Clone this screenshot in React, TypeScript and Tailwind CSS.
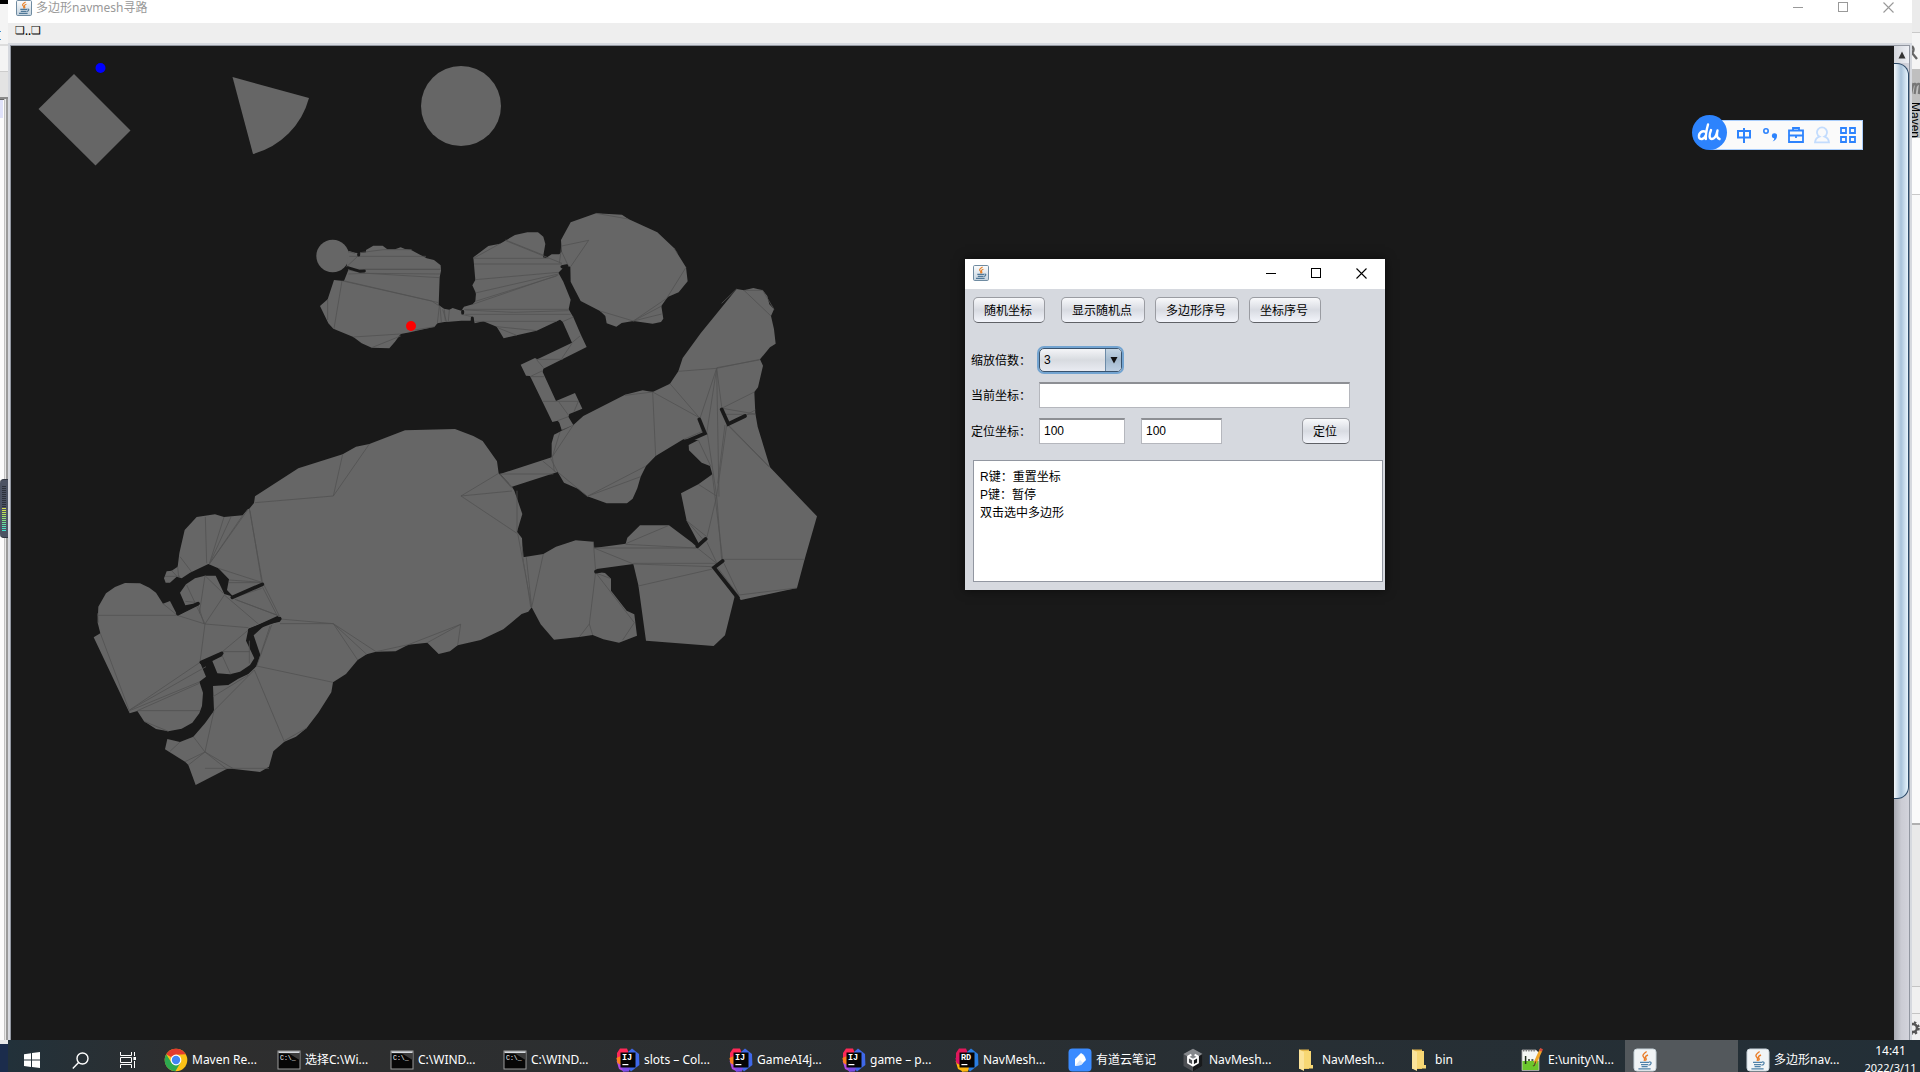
import React from "react";

const UI = "font-['Noto_Sans','Noto_Sans_CJK_SC',sans-serif]";
const SWING = "font-['Liberation_Sans','Noto_Sans_CJK_SC',sans-serif]";

function JavaIcon({ className }: { className: string }) {
  return (
    <svg viewBox="0 0 16 16" className={className} aria-hidden="true">
      <defs>
        <linearGradient id="jv" x1="0" y1="0" x2="0" y2="1">
          <stop offset="0" stopColor="#fdfdfd" />
          <stop offset="1" stopColor="#c3d2de" />
        </linearGradient>
      </defs>
      <rect x="0.5" y="0.5" width="15" height="15" rx="1.2" fill="url(#jv)" stroke="#6f8ba1" />
      <path d="M9.6 2 C6 4.2 6 5 7.4 6.2 C8.2 7 8 7.6 7.4 8.4 M10.4 4.2 C8 5.2 8 6 8.8 6.8 C9.2 7.4 8.8 8 8.4 8.4" fill="none" stroke="#e8822a" strokeWidth="1.1" />
      <path d="M4.3 9.4 H11 M4.8 11.4 H10.6 M3 13.4 H11.6 M11.4 9.2 C13.6 8.8 13 11 11 11.4" fill="none" stroke="#4f7898" strokeWidth="1.1" />
    </svg>
  );
}

function JavaTaskIcon() {
  return (
    <svg viewBox="0 0 24 24" className="size-6" aria-hidden="true">
      <rect x="1" y="1" width="22" height="22" rx="3" fill="#f1f4f6" stroke="#c8d3da" />
      <path d="M13.6 3.5 C8.6 7 9.6 8 11.2 9.8 C12.2 11 11.6 12 11 12.8 M15 7 C11.8 8.4 12.2 9.2 13 10.4 C13.6 11.4 13 12.2 12.4 12.8" fill="none" stroke="#ea7d28" strokeWidth="1.4" />
      <path d="M7 14.4 H16 M8 16.6 H15 M8.6 18.6 H14.6 M5.4 20.8 H17.6 M16 14 C19.4 13.4 18.4 17 15.4 17.2" fill="none" stroke="#4f81a8" strokeWidth="1.2" />
    </svg>
  );
}

function ChromeIcon() {
  return (
    <svg viewBox="0 0 24 24" className="size-6" aria-hidden="true">
      <circle cx="12" cy="12" r="11.3" fill="#fbc116" />
      <path d="M12 12 L2.2 6.3 A11.3 11.3 0 0 1 21.8 6.3 L12 6.8 Z" fill="#e33b2e" />
      <path d="M2.2 6.3 A11.3 11.3 0 0 0 11.4 23.3 L16.6 14.6 L7.4 14.6 Z" fill="#2da94f" />
      <circle cx="12" cy="12" r="5.4" fill="#fff" />
      <circle cx="12" cy="12" r="4.2" fill="#4285f4" />
    </svg>
  );
}

function CmdIcon() {
  return (
    <svg viewBox="0 0 24 24" className="size-6" aria-hidden="true">
      <rect x="1" y="3" width="22" height="18" fill="#070707" stroke="#9b9b9b" />
      <path d="M1.5 4.2 H22.5" stroke="#d7dbe0" strokeWidth="1.8" />
      <path d="M1.5 5 L12 5.5 L22.5 12 V5 Z" fill="#3c3c3c" />
      <text x="3" y="11.6" fontSize="6.5" fill="#fff" fontFamily="Liberation Mono, monospace">C:\_</text>
    </svg>
  );
}

function JetIcon({ label }: { label: string }) {
  const rider = label === "RD";
  return (
    <svg viewBox="0 0 24 24" className="size-6" aria-hidden="true">
      <path d="M1 5 L4 0.5 L11 0.5 L14 8 L8 17 L1 14 Z" fill={rider ? "#e0195a" : "#fe2857"} />
      <path d="M12 4 L16 0.5 L23 6 L23.4 17 L15 23.5 L10 18 Z" fill={rider ? "#2a7de1" : "#3f68e8"} />
      <path d="M0.6 13 L6 10 L12 20 L8 23.6 L3 21 Z" fill={rider ? "#fdb60d" : "#b04ae0"} />
      <path d="M0.4 10 L5 8 L5 17 L1.4 15 Z" fill={rider ? "#dd1265" : "#fc801d"} />
      <path d="M6 19 L14 19 L13 23.6 L7 23.8 Z" fill={rider ? "#fdb60d" : "#7b4be6"} />
      <rect x="4.5" y="4.5" width="15" height="15" fill="#050505" />
      <text x="6" y="12.4" fontSize="8.5" fontWeight="700" fill="#fff" fontFamily="Liberation Mono, monospace">{label}</text>
      <rect x="6.4" y="16" width="6" height="1.2" fill="#fff" />
    </svg>
  );
}

function YoudaoIcon() {
  return (
    <svg viewBox="0 0 24 24" className="size-6" aria-hidden="true">
      <rect x="0.5" y="0.5" width="23" height="23" rx="4" fill="#3b8bff" />
      <path d="M7 18 L7 11 L13 5 Q17 7 18 12 L13 17 Z" fill="#fff" />
      <path d="M7 18 L12 12 L15 15 L13 17 Z" fill="#d5e6ff" />
    </svg>
  );
}

function UnityIcon() {
  return (
    <svg viewBox="0 0 24 24" className="size-6" aria-hidden="true">
      <path d="M12 0.8 L21.5 6 V18 L12 23.4 L2.5 18 V6 Z" fill="#4c4f53" />
      <path d="M12 0.8 L21.5 6 L12 12 L2.5 6 Z" fill="#85888c" />
      <path d="M12 12 L21.5 6 V18 L12 23.4 Z" fill="#17191b" />
      <path d="M10.4 6.6 L7 8.6 V14.8 L12 17.8 L17 14.8 V8.6 L13.6 6.6 M12 11.8 V17 M12 11.8 L7.6 9.2 M12 11.8 L16.4 9.2" fill="none" stroke="#fff" strokeWidth="1.8" />
    </svg>
  );
}

function FolderIcon() {
  return (
    <svg viewBox="0 0 24 24" className="size-6" aria-hidden="true">
      <path d="M5 1.5 H15 V21 H5 Z" fill="#e3b64c" />
      <path d="M7.5 3 H17 V17 H19 V20.5 H10 Z" fill="#f7d774" />
      <path d="M5 1.5 L10 4 V23 L5 20.5 Z" fill="#fbe39a" />
    </svg>
  );
}

function NotepadIcon() {
  return (
    <svg viewBox="0 0 24 24" className="size-6" aria-hidden="true">
      <path d="M2 2 H16 L19 5 V22.5 H2 Z" fill="#f5f7f4" stroke="#a8aaa8" strokeWidth="0.8" />
      <path d="M2.4 13 H18.6 V22 H2.4 Z" fill="#6cc62c" />
      <path d="M3 2.6 H16" stroke="#7c7c7c" strokeWidth="1.6" strokeDasharray="1.4 1.2" />
      <path d="M5.6 8 V16 M8 12 H10 M11.4 12 H13.4" stroke="#23301d" strokeWidth="1.5" />
      <path d="M21 2 L15 15" stroke="#f0a527" strokeWidth="3" />
      <path d="M15.8 13.4 L14.4 17.4 L12.9 18" stroke="#5f4a22" strokeWidth="1.2" fill="none" />
      <path d="M21.6 0.6 L20.4 3.2" stroke="#d64b3c" strokeWidth="3" />
    </svg>
  );
}

function WindowControls({ className }: { className: string }) {
  return (
    <div className={"flex h-full items-center " + className}>
      <button aria-label="Minimize" className="flex h-full w-12 items-center justify-center">
        <svg width="11" height="11" className="block"><path d="M0 5.5 H10" stroke="currentColor" /></svg>
      </button>
      <button aria-label="Maximize" className="flex h-full w-[43px] items-center justify-center">
        <svg width="11" height="11" className="block"><rect x="0.5" y="0.5" width="9" height="9" fill="none" stroke="currentColor" /></svg>
      </button>
      <button aria-label="Close" className="flex h-full w-[47px] items-center justify-center">
        <svg width="11" height="11" className="block"><path d="M0.5 0.5 L10.5 10.5 M10.5 0.5 L0.5 10.5" stroke="currentColor" strokeWidth="1.1" /></svg>
      </button>
    </div>
  );
}

/* Mesh sections, each in its own local space at three units per pixel. */
const NORTH =
  "M145 152 L165 158 L180 160 L198 157 L198 150 L220 137 L248 137 L262 148 L285 148 L302 142 L315 147 L332 149 L380 175 L402 180 L422 196 L423 212 L419 232 L416 315 L432 326 L448 329 L458 324 L476 330 L484 332 L492 320 L518 313 L526 304 L528 280 L517 256 L526 240 L520 172 L565 138 L600 131 L645 105 L682 97 L714 97 L730 110 L736 132 L729 172 L738 174 L755 163 L778 163 L785 155 L783 120 L812 67 L888 40 L966 44 L985 57 L1072 97 L1122 144 L1158 202 L1163 244 L1136 277 L1103 291 L1084 318 L1090 356 L1083 366 L1058 371 L1000 363 L965 369 L949 380 L920 370 L916 348 L900 333 L842 303 L812 245 L811 200 L786 195 L787 206 L775 218 L790 245 L812 299 L806 328 L820 352 L843 405 L860 441 L730 506 L728 516 L768 603 L825 579 L847 626 L808 642 L805 650 L820 675 L785 690 L778 668 L773 662 L757 666 L690 528 L678 527 L662 494 L705 474 L712 478 L816 428 L788 365 L780 359 L710 392 L650 406 L611 415 L590 380 L550 364 L524 370 L522 360 L516 350 L512 362 L484 362 L448 365 L433 366 L412 370 L404 380 L330 397 L302 402 L285 425 L268 445 L215 443 L185 430 L160 411 L100 386 L85 370 L60 318 L83 298 L102 240 L132 243 L145 210 L140 200 Z";
const NORTH_LINES =
  "M140 200 L176 166 M145 155 L165 160 M180 158 L250 149 L335 149 M148 169 H378 M140 200 L160 208 H422 M195 208 H420 M145 210 L195 220 L420 222 M145 222 L200 220 L418 233 M128 243 L416 308 M135 243 L395 303 L418 318 M126 243 L102 386 M83 298 V360 M160 411 L302 402 M215 443 L302 408 M404 380 L345 390 M418 318 L412 370 M420 318 L424 366 M428 328 L440 366 M433 328 L436 364 M448 330 L445 364 M484 343 L516 350 M522 192 H786 M520 175 H745 M522 174 L598 132 M617 120 L729 165 M617 122 L786 190 M526 239 L775 217 M526 279 L775 222 M518 313 L775 225 M526 304 L770 228 M492 328 H806 M496 330 L640 337 L806 332 M496 343 H812 M524 364 H770 M590 380 L710 392 M595 384 L650 406 M788 365 L820 351 M816 428 L840 408 M816 430 L785 476 M712 478 H788 M709 478 L730 503 M690 530 L728 512 M690 530 H732 M728 604 H837 M835 604 L822 635 M776 605 L805 645 M773 662 L805 650 M785 138 L866 121 L812 200 M785 138 L778 190 M785 155 L805 198 M888 40 L985 57 M1122 144 L1132 160 M1158 202 L1100 295 L1000 363 L1085 318 M1000 363 L1085 342 M1000 363 L900 333";

const EAST =
  "M460 465 L490 438 L615 374 L668 361 L698 366 L750 341 L775 304 L788 264 L842 190 L950 57 L972 61 L1000 54 L1028 61 L1042 78 L1048 103 L1062 118 L1053 138 L1062 178 L1067 221 L1050 232 L1020 268 L1029 287 L1014 352 L1003 366 L1006 430 L1013 470 L1050 592 L1191 739 L1154 868 L1131 954 L963 990 L945 975 L943 983 L915 1096 L881 1128 L678 1112 L655 945 L640 882 L530 897 L527 905 L555 909 L573 926 L573 962 L620 1022 L643 1033 L651 1097 L597 1118 L550 1108 L518 1095 L478 1101 L402 1109 L362 1063 L335 1012 L309 862 L370 852 L408 830 L467 811 L520 815 L522 834 L617 821 L622 803 L660 766 L747 766 L815 817 L832 832 L835 818 L800 752 L783 670 L835 643 L877 613 L870 588 L845 578 L807 541 L806 525 L835 510 L790 508 L707 558 L678 588 L662 620 L652 655 L638 686 L621 700 L560 700 L502 679 L475 657 L432 638 L413 606 L276 650 L240 612 L395 562 L395 520 L402 494 L425 482 Z";
const EAST_LINES =
  "M425 482 L460 465 L397 560 M397 560 L420 486 M392 565 L413 606 M397 560 L403 605 M368 573 L408 606 M240 612 H400 M615 376 L698 366 L707 558 M698 366 L838 443 M750 341 L838 443 M775 304 L890 295 L1020 268 M890 293 L1018 270 M890 295 L840 445 M890 295 L860 490 M890 295 L897 680 M890 295 L905 410 M905 415 L1003 366 M907 415 L1006 432 M905 433 H1006 M975 437 L1006 420 M925 465 L1050 592 M925 467 L1046 590 M862 490 L890 678 M920 465 L890 678 M915 465 L893 640 M838 448 L845 485 L792 508 M835 510 L873 590 M835 643 L890 678 L860 805 M877 613 L908 870 M890 678 L905 870 M502 679 L678 588 M502 679 L662 620 M413 606 L502 679 M950 57 L905 100 M972 61 H1028 M972 61 L1053 138 M1028 61 L1062 118 M800 752 L860 800 M800 752 L855 815 M617 821 L747 766 M617 823 L830 834 H522 L640 882 M640 880 H890 L832 834 M640 882 L878 890 M655 948 L878 897 M860 815 L890 878 M908 868 H1154 M912 880 L957 975 M957 975 L1131 954 M893 893 L957 978 M370 852 L335 1012 M319 862 L335 1012 M520 815 L527 905 L508 1062 L518 1095 M508 1062 L478 1101 M530 912 L643 1058 L608 1110 M530 910 L573 926";
const EAST_WALLS =
  "M905 418 L925 462 L975 438 M838 448 L855 490 L802 513 M832 829 L857 807 M908 873 L882 893 L954 984 M528 905 L540 903";

const SOUTH =
  "M508 326 L522 309 L525 289 L655 205 L788 163 L828 140 L868 132 L975 91 L1125 87 L1180 108 L1208 123 L1251 184 L1256 220 L1296 260 L1303 272 L1327 342 L1311 395 L1326 415 L1329 470 L1355 622 L1345 635 L1325 642 L1270 688 L1202 720 L1133 736 L1110 754 L1076 762 L1042 728 L985 734 L947 754 L888 755 L860 763 L833 780 L798 822 L759 847 L754 877 L715 938 L680 984 L648 1010 L613 1025 L580 1054 L567 1100 L540 1116 L455 1106 L440 1107 L347 1155 L325 1095 L315 1085 L255 1048 L262 1017 L300 1026 L340 1010 L375 970 L402 932 L399 858 L445 855 L475 836 L505 822 L530 798 L541 765 L521 706 L555 675 L600 665 L604 655 L592 648 L505 688 L498 722 L523 775 L510 795 L480 815 L450 823 L412 820 L397 783 L427 768 L427 755 L360 787 L378 830 L358 845 L369 878 L366 918 L358 940 L337 968 L305 986 L265 994 L228 987 L192 964 L172 933 L149 940 L41 712 L61 700 L53 668 L55 620 L78 580 L105 561 L135 549 L180 550 L208 563 L228 578 L249 611 L270 603 L292 646 L355 615 L355 608 L316 616 L300 578 L318 553 L345 535 L375 527 L407 527 L433 582 L460 590 L441 570 L447 538 L415 505 L385 492 L330 518 L305 535 L290 530 L270 548 L257 548 L252 535 L260 514 L275 512 L293 500 L298 460 L314 390 L350 351 L405 343 L432 351 L488 346 L503 328 Z";
const SOUTH_LINES =
  "M525 308 L760 288 L788 163 M760 288 L868 132 M1256 220 L1143 288 L1296 273 M1143 288 L1311 400 M1311 272 V395 M1256 220 L1296 265 M1313 400 L1355 622 M1326 440 L1352 622 M508 326 L547 545 L598 648 M510 332 L545 545 M388 492 L432 351 M388 492 L453 351 M388 492 L488 346 M388 492 L503 330 M380 490 L376 351 M300 470 L335 516 M293 500 L296 530 M255 529 H300 M275 512 L290 528 M415 505 L545 547 M447 540 L545 547 M447 548 H545 M465 598 L598 648 M547 560 L592 648 M470 600 L590 645 M545 565 L470 590 M433 585 L535 672 M433 585 L375 672 L292 646 H53 M375 527 L358 640 M375 527 L430 580 M320 555 L375 672 M316 604 L355 608 M355 615 L372 672 M375 672 L505 683 M375 672 L360 787 M505 690 L427 755 H510 M508 722 V790 M427 768 L452 823 M360 787 L149 930 L378 800 M149 932 L360 845 M172 932 L358 850 M172 932 H360 M61 700 L149 935 M192 964 L265 994 M600 657 L760 671 H600 M760 671 L833 780 M760 671 L860 763 M760 671 L888 755 L985 734 L1142 673 L1133 736 M1042 728 L1142 673 M575 675 L530 798 L759 847 M570 678 L541 765 M523 810 L613 1025 M680 984 L613 1022 M523 810 L402 932 L375 1056 L340 1010 M505 825 L399 890 M375 1056 L315 1085 M375 1056 L325 1095 M375 1056 L440 1107 M375 1056 L460 1106 M375 1105 H567 M270 1054 L300 1026 M53 640 L55 668 M249 611 L292 646";
const SOUTH_WALLS = "M457 592 L547 553 M294 641 L354 611 M364 787 L425 760 M510 690 L599 656";

function MeshCanvas() {
  return (
    <svg className="block size-full" role="img" aria-label="navmesh">
      <g transform="translate(-11 -46)">
        <g fill="#666666">
          <path d="M74 74 L130.5 130.5 L95.5 165.5 L38.5 109 Z" />
          <path d="M232.5 77 L309 98 A79 79 0 0 1 253 154 Z" />
          <circle cx="461" cy="106" r="40" />
        </g>
        <circle cx="100.5" cy="68" r="5" fill="#0000ff" />
        <g transform="translate(80 400) scale(0.33333)">
          <path d={SOUTH} fill="#666666" />
          <path d={SOUTH_LINES} fill="none" stroke="#525252" strokeWidth="2.4" />
          <path d={SOUTH_WALLS} fill="none" stroke="#191919" strokeWidth="11" strokeLinecap="round" />
        </g>
        <g transform="translate(420 270) scale(0.33333)">
          <path d={EAST} fill="#666666" />
          <path d={EAST_LINES} fill="none" stroke="#525252" strokeWidth="2.4" />
          <path d={EAST_WALLS} fill="none" stroke="#191919" strokeWidth="11" strokeLinecap="round" />
        </g>
        <g transform="translate(300 200) scale(0.33333)">
          <circle cx="98" cy="168" r="49" fill="#666666" />
          <path d={NORTH} fill="#666666" />
          <path d={NORTH_LINES} fill="none" stroke="#525252" strokeWidth="2.4" />
          <path d="M143 203 L180 214 L193 213 M176 162 V165 M488 334 V339 M517 354 V366 M786 200 L800 197" fill="none" stroke="#191919" strokeWidth="9" strokeLinecap="round" />
          <circle cx="333" cy="378" r="15" fill="#ff0000" />
        </g>
      </g>
    </svg>
  );
}

function ImeBar() {
  return (
    <div className="absolute right-[31px] top-[69px] flex items-center">
      <div className="z-10 -mr-[18px] size-[35px] shrink-0 rounded-full bg-[#2d83fd]">
        <svg viewBox="0 0 35 35" className="size-full" role="img" aria-label="du">
          <path d="M16 9.5 C14.5 15 13.6 19 13.8 24 M14 17 C10 15 6.5 18 7 22 C7.6 25.5 12 24.5 14 20 M19 15 C17 20 17 24 20 24 C23 24 24.5 20 25.5 15.5 M25.5 15.5 C24.4 20 24.6 23 27.5 24" fill="none" stroke="#fff" strokeWidth="2.4" strokeLinecap="round" />
        </svg>
      </div>
      <div className="mt-1 flex h-[30px] items-center border border-[#a9cdfb] bg-[#fafafa] pl-[21px] pr-px text-[#2d83fd]">
        <button aria-label="中" className="flex w-[26px] justify-center">
          <svg width="16" height="16"><path d="M2 4 H14 V10.5 H2 Z M8 1 V16" fill="none" stroke="currentColor" strokeWidth="2" /></svg>
        </button>
        <button aria-label="Punctuation" className="flex w-[26px] justify-center">
          <svg width="16" height="16"><circle cx="4" cy="4" r="2.2" fill="none" stroke="currentColor" strokeWidth="1.6" /><path d="M12.5 6.2 A2.5 2.5 0 0 1 15 9 Q15 13 10.6 14.4 Q12.6 12.6 12.2 11.2 A2.5 2.5 0 0 1 12.5 6.2 Z" fill="currentColor" /></svg>
        </button>
        <button aria-label="Toolbox" className="flex w-[26px] justify-center">
          <svg width="16" height="16"><path d="M1 3.5 H15 V15 H1 Z M1 8.5 H15 M5 3.5 V1 H11 V3.5 M8 8 V11" fill="none" stroke="currentColor" strokeWidth="1.8" /></svg>
        </button>
        <button aria-label="Account" className="flex w-[26px] justify-center text-[#c3dcfd]">
          <svg width="16" height="18"><path d="M5.4 10.6 A5 5 0 1 1 10.6 10.6 Q14.5 11.8 15 16.4 H1 Q1.5 11.8 5.4 10.6 Z" fill="none" stroke="currentColor" strokeWidth="1.8" /></svg>
        </button>
        <button aria-label="Menu" className="flex w-[26px] justify-center">
          <svg width="16" height="16"><path d="M1 1 H6 V6 H1 Z M10 1 H15 V6 H10 Z M1 10 H6 V15 H1 Z M10 10 H15 V15 H10 Z" fill="none" stroke="currentColor" strokeWidth="1.8" /></svg>
        </button>
      </div>
    </div>
  );
}

function SwingButton({ children, className }: { children: React.ReactNode; className: string }) {
  return (
    <button className={"h-[26px] shrink-0 rounded-[5px] border border-[#9a9ca2] border-b-[#5f6166] bg-linear-to-b from-[#f8f9fb] via-[#d8dbe2] to-[#f3f5fb] pt-px pr-0.5 text-xs text-black " + className}>
      {children}
    </button>
  );
}

const FIELD = "h-[26px] border border-[#b5b7bd] border-t-2 border-t-[#8d8f94] bg-white px-1 pb-0.5 text-xs text-black outline-none";
const LABEL = "w-[68px] shrink-0 pt-0.5";

function ControlDialog() {
  return (
    <div role="dialog" aria-label="控制" className={"absolute left-[954px] top-[213px] w-[420px] bg-[#d6d9df] text-xs text-black shadow-[0_0_10px_rgba(0,0,0,0.6)] " + SWING}>
      <div className="flex h-[30px] items-center justify-between bg-white pb-0.5 pl-2">
        <JavaIcon className="size-4" />
        <WindowControls className="text-black" />
      </div>
      <div className="flex flex-col pb-2 pl-2 pr-0.5 pt-2">
        <div className="flex">
          <SwingButton className="mr-4 w-[72px]">随机坐标</SwingButton>
          <SwingButton className="mr-2.5 w-[84px]">显示随机点</SwingButton>
          <SwingButton className="mr-2.5 w-[84px]">多边形序号</SwingButton>
          <SwingButton className="w-[72px]">坐标序号</SwingButton>
        </div>
        <div className="-ml-0.5 mr-[33px] mt-6 flex flex-col gap-2.5">
          <div className="flex h-[25px] items-center">
            <label htmlFor="zoom" className={LABEL}>缩放倍数：</label>
            <div className="relative flex h-6 w-[83px]">
              <select id="zoom" defaultValue="3" className="size-full appearance-none rounded-[5px] border border-[#39536e] bg-linear-to-b from-[#f4f5f8] via-[#d8dbe0] to-[#e9ebf2] pl-1 text-xs text-black shadow-[0_0_0_2px_#73a4d1] outline-none">
                <option>1</option>
                <option>2</option>
                <option>3</option>
              </select>
              <span className="pointer-events-none absolute inset-y-px right-px flex w-4 items-center justify-center rounded-r-[4px] border-l border-[#6c8ba8] bg-linear-to-b from-[#c5d5e3] via-[#a3bacf] to-[#bccfe3]">
                <svg width="8" height="8"><path d="M0.5 1 H7.5 L4 7.5 Z" fill="#111" /></svg>
              </span>
            </div>
          </div>
          <div className="flex items-center">
            <label htmlFor="current" className={LABEL}>当前坐标：</label>
            <input id="current" className={"min-w-0 flex-1 " + FIELD} />
          </div>
          <div className="flex items-center">
            <label htmlFor="locate-x" className={LABEL}>定位坐标：</label>
            <input id="locate-x" defaultValue="100" className={"mr-4 w-[86px] " + FIELD} />
            <input aria-label="定位坐标 Y" defaultValue="100" className={"w-[81px] " + FIELD} />
            <SwingButton className="ml-auto w-12">定位</SwingButton>
          </div>
        </div>
        <textarea
          aria-label="说明"
          defaultValue={"R键：重置坐标\nP键：暂停\n双击选中多边形"}
          className="mt-4 block h-[122px] w-full resize-none border border-[#9297a1] bg-white px-1.5 pb-1.5 pt-[7px] text-xs leading-[18px] outline-none"
        />
      </div>
    </div>
  );
}

function Scrollbar() {
  return (
    <div className="flex w-[15px] shrink-0 flex-col bg-linear-to-r from-[#a9abb3] via-[#cbccd4] to-[#d3d4dc]">
      <button aria-label="Scroll up" className="flex h-[17px] items-center justify-center bg-linear-to-r from-[#d3d6dc] to-[#eef0f5]">
        <svg width="8" height="8"><path d="M4 0.5 L7.5 7.5 H0.5 Z" fill="#333" /></svg>
      </button>
      <div className="h-[74%] rounded-r-[12px] border border-l-0 border-[#2c4a68] bg-linear-to-r from-[#f3f7fa] via-[#a9c3da] to-[#e8f5fd]" />
    </div>
  );
}

const METER = [
  "bg-[#2c313a]", "bg-[#2c313a]", "bg-[#2c313a]", "bg-[#2c313a]", "bg-[#2c313a]", "bg-[#2c313a]",
  "bg-[#2c313a]", "bg-[#2c313a]", "bg-[#2c313a]", "bg-[#2c313a]", "bg-[#2c313a]", "bg-[#d9e04a]",
  "bg-[#cfe04e]", "bg-[#c0e254]", "bg-[#b0e25c]", "bg-[#a0e268]", "bg-[#90e274]", "bg-[#80e282]",
  "bg-[#70e290]", "bg-[#62e2a0]", "bg-[#56e2b0]", "bg-[#4ae2c0]", "bg-[#40e0cc]",
];

function LeftStrip() {
  return (
    <div className="relative flex w-2 shrink-0 flex-col bg-[#f4f4f4]">
      <div className="h-1 bg-black" />
      <div className="flex h-[42px] flex-col justify-end gap-[7px] border-b-2 border-[#dddddd] pb-1">
        <div className="h-px w-px bg-[#3b8fd0]" />
        <div className="h-px w-px bg-[#3b8fd0]" />
      </div>
      <div className="h-[26px] border-b border-[#cccccc]" />
      <div className="h-[25px] bg-[#e3e3e3]" />
      <div className="flex min-h-0 flex-1 border-t-2 border-[#8a8a8a]">
        <div className="w-1 border-t border-[#666] bg-[#fcfcfc]">
          <div className="h-[18px] w-[3px] bg-[#e0e2fa]" />
        </div>
        <div className="w-px bg-[#c4c4c4]" />
        <div className="w-px bg-[#e8e8e8]" />
        <div className="flex-1 bg-[#9b9b9b]" />
      </div>
      <div className="absolute left-0 top-[479px] flex h-[59px] w-2 flex-col items-center gap-px rounded-l border-y border-[#333842] bg-[#4c5363] pt-1.5">
        {METER.map((c, i) => (
          <span key={i} className={"h-px w-1 shrink-0 " + c} />
        ))}
      </div>
    </div>
  );
}

function RightStrip() {
  return (
    <div className="flex w-2 shrink-0 flex-col overflow-hidden bg-[#fdfdfd]">
      <div className="h-[33px] shrink-0 border-b border-[#c9c9c9] bg-[#ebebeb]" />
      <div className="h-9 shrink-0 bg-[#f5f5f5] pt-3">
        <svg width="8" height="18" className="block"><path d="M0 1 Q3 5 0 8 M0 8 L5 14" fill="none" stroke="#666" strokeWidth="2.4" /></svg>
      </div>
      <div className="h-[69px] shrink-0 bg-[#bfbfbf]">
        <svg width="8" height="69" className="block">
          <path d="M-1 25 L1.5 14 M0.5 17 Q3 13.5 4 15.5 L2.6 25 M4 17 Q6.5 13.5 8 15.5 L6.8 25" fill="none" stroke="#777" strokeWidth="2.2" />
          <text transform="translate(-1 33) rotate(90)" fontSize="12" fill="#000" fontFamily="Liberation Sans, sans-serif">Maven</text>
        </svg>
      </div>
      <div className="h-[57px] shrink-0 border-b border-[#c9c9c9]" />
      <div className="flex-[630] bg-[#fafafa]" />
      <div className="flex-[162] border-t-2 border-[#b0b0b0] bg-[#e9e9e9]" />
      <div className="h-7 shrink-0 border-y border-[#c4c4c4] bg-[#f0f0f0]" />
      <div className="h-[26px] shrink-0 bg-[#f0f0f0] pt-1.5">
        <svg width="8" height="16" className="block"><circle cx="1" cy="8" r="4" fill="none" stroke="#555" strokeWidth="2.6" /><circle cx="1" cy="8" r="5.8" fill="none" stroke="#555" strokeWidth="2" strokeDasharray="2.4 2.2" /></svg>
      </div>
    </div>
  );
}

const TASKS: { icon: React.ReactNode; text: string; active?: boolean }[] = [
  { icon: <ChromeIcon />, text: "Maven Re..." },
  { icon: <CmdIcon />, text: "选择C:\\Wi..." },
  { icon: <CmdIcon />, text: "C:\\WIND..." },
  { icon: <CmdIcon />, text: "C:\\WIND..." },
  { icon: <JetIcon label="IJ" />, text: "slots – Col..." },
  { icon: <JetIcon label="IJ" />, text: "GameAI4j..." },
  { icon: <JetIcon label="IJ" />, text: "game – p..." },
  { icon: <JetIcon label="RD" />, text: "NavMesh..." },
  { icon: <YoudaoIcon />, text: "有道云笔记" },
  { icon: <UnityIcon />, text: "NavMesh..." },
  { icon: <FolderIcon />, text: "NavMesh..." },
  { icon: <FolderIcon />, text: "bin" },
  { icon: <NotepadIcon />, text: "E:\\unity\\N..." },
  { icon: <JavaTaskIcon />, text: "", active: true },
  { icon: <JavaTaskIcon />, text: "多边形nav..." },
];

function Taskbar() {
  return (
    <div className="flex h-8 shrink-0">
      <div className="w-2 shrink-0 border-t-4 border-[#e8e8e8] bg-[#1b2c4c]" />
      <nav className={"flex h-10 min-w-0 flex-1 bg-linear-to-r from-[#22313a] via-[#2e2e2e] via-10% to-[#232f37] text-xs text-white " + UI}>
        <button aria-label="Start" className="flex w-12 items-center justify-center">
          <svg width="16" height="16"><path d="M0 2.2 L7 1.2 V7.6 H0 Z M8 1 L16 0 V7.6 H8 Z M0 8.5 H7 V14.9 L0 13.9 Z M8 8.5 H16 V16 L8 15 Z" fill="#fff" /></svg>
        </button>
        <button aria-label="Search" className="flex w-12 items-center justify-center">
          <svg width="17" height="17"><circle cx="10.5" cy="6.5" r="5.5" fill="none" stroke="#fff" strokeWidth="1.4" /><path d="M6.6 10.4 L0.8 16.4" stroke="#fff" strokeWidth="1.4" /></svg>
        </button>
        <button aria-label="Task view" className="flex w-[52px] items-center justify-center pr-1">
          <svg width="17" height="16"><path d="M0.5 0 V3.5 H11.5 V0 M0.5 16 V12.5 H11.5 V16 M0.5 5.5 H11.5 V10.5 H0.5 Z M14.5 0 V4 M14.5 9 V16" fill="none" stroke="#fff" /><path d="M13.4 5 H16 V8 H13.4 Z" fill="#fff" /></svg>
        </button>
        {TASKS.map((t, i) => (
          <button
            key={i}
            aria-label={t.text || "Java"}
            className={"flex w-[113px] items-center gap-1 overflow-hidden whitespace-nowrap pl-2 " + (t.active ? "bg-[#53585c]" : "")}
          >
            <span className="shrink-0">{t.icon}</span>
            <span>{t.text}</span>
          </button>
        ))}
        <div className="flex flex-1 flex-col items-center whitespace-nowrap pl-2.5 pt-px">
          <span className="h-[19px] leading-[19px]">14:41</span>
          <span className="h-4 text-[11px] leading-4">2022/3/11</span>
        </div>
      </nav>
    </div>
  );
}

export default function App() {
  return (
    <div className="flex h-screen w-full flex-col overflow-hidden bg-[#191919]">
      <div className="flex min-h-0 flex-1">
        <LeftStrip />
        <main className="flex min-w-0 flex-1 flex-col bg-[#d6d9df]">
          <header className={"flex h-[23px] shrink-0 items-start justify-between bg-white pl-2 text-xs text-[#999] " + UI}>
            <div className="flex h-[15px] items-center gap-1">
              <JavaIcon className="size-4" />
              <h1>多边形navmesh寻路</h1>
            </div>
            <div className="h-[15px]">
              <WindowControls className="text-[#999]" />
            </div>
          </header>
          <div className="h-5 shrink-0 bg-[#eeeeee] pl-[7px]">
            <button className="flex h-4 items-center font-['DejaVu_Sans',sans-serif] text-[11px] font-bold text-black">
              ❏<span className="self-end text-[8px]">..</span>❏
            </button>
          </div>
          <div className="mt-0.5 flex min-h-0 flex-1 pl-0.5">
            <div className="flex min-w-0 flex-1 border-l border-t border-[#9297a1]">
              <section className="relative min-w-0 flex-1 overflow-hidden bg-[#191919]">
                <MeshCanvas />
                <ControlDialog />
                <ImeBar />
              </section>
              <Scrollbar />
            </div>
            <div className="w-[3px] shrink-0 border-l border-[#9297a1]" />
          </div>
        </main>
        <RightStrip />
      </div>
      <Taskbar />
    </div>
  );
}
